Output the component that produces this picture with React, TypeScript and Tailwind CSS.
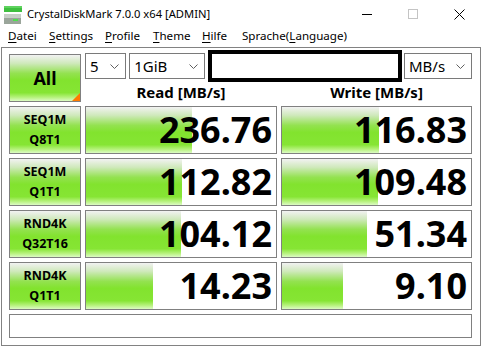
import React from "react";

const FONT = { fontFamily: '"Noto Sans", "Open Sans", sans-serif' } as React.CSSProperties;

const rows = [
  { a: "SEQ1M", b: "Q8T1", r: "236.76", rw: 106, w: "116.83", ww: 97 },
  { a: "SEQ1M", b: "Q1T1", r: "112.82", rw: 96, w: "109.48", ww: 96 },
  { a: "RND4K", b: "Q32T16", r: "104.12", rw: 95, w: "51.34", ww: 85 },
  { a: "RND4K", b: "Q1T1", r: "14.23", rw: 67, w: "9.10", ww: 61 },
];

const green =
  "bg-[linear-gradient(to_bottom,#f2f2f2_0%,#cfe9bb_18%,#93e250_40%,#82e32e_55%,#86e534_82%,#b6f27c_92%,#dcfbc4_100%)]";

function Chevron() {
  return (
    <svg width="9" height="5" viewBox="0 0 9 5" className="shrink-0">
      <path d="M0.5 0.5 L4.5 4.5 L8.5 0.5" fill="none" stroke="#606060" strokeWidth="1" />
    </svg>
  );
}

function Combo({ text, w }: { text: string; w: string }) {
  return (
    <div className={`${w} h-[26px] border border-[#7a7a7a] bg-white flex items-center justify-between pl-[4px] pr-[6px] shrink-0`}>
      <span className="text-[15px] leading-none text-black">{text}</span>
      <Chevron />
    </div>
  );
}

function U({ c }: { c: string }) {
  return <span className="underline underline-offset-2 decoration-1">{c}</span>;
}

export default function App() {
  return (
    <div className="w-[482px] h-[347px] bg-white relative overflow-hidden text-black" style={FONT}>
      {/* Title bar */}
      <div className="h-[28px] flex items-center">
        <svg width="20" height="18" viewBox="0 0 20 18" className="ml-[4px] mt-[1px]">
          <rect x="0" y="0" width="18" height="6" fill="#3fbf3f" />
          <rect x="0" y="0" width="18" height="2" fill="#5fd35f" />
          <rect x="0" y="8" width="17" height="10" fill="#9aa59a" />
          <rect x="0" y="8" width="17" height="4" fill="#c7cfc7" />
          <rect x="9" y="13" width="5" height="2" fill="#4fdf4f" />
        </svg>
        <span className="ml-[3px] text-[11.2px] text-black">CrystalDiskMark 7.0.0 x64 [ADMIN]</span>
        <div className="ml-auto flex items-center h-full">
          <div className="w-[46px] h-full flex items-center justify-center">
            <svg width="10" height="10" viewBox="0 0 10 10"><path d="M0 5.5 H10" stroke="#000" strokeWidth="1" /></svg>
          </div>
          <div className="w-[46px] h-full flex items-center justify-center">
            <svg width="10" height="10" viewBox="0 0 10 10"><rect x="0.5" y="0.5" width="9" height="9" fill="none" stroke="#c4c4c4" strokeWidth="1" /></svg>
          </div>
          <div className="w-[46px] h-full flex items-center justify-center">
            <svg width="11" height="11" viewBox="0 0 11 11"><path d="M0.5 0.5 L10.5 10.5 M10.5 0.5 L0.5 10.5" stroke="#000" strokeWidth="1" /></svg>
          </div>
        </div>
      </div>

      {/* Menu bar */}
      <div className="h-[19px] flex items-start pl-[8px] text-[11.6px] leading-[16px]">
        <span className="w-[41px]"><U c="D" />atei</span>
        <span className="w-[56px]"><U c="S" />ettings</span>
        <span className="w-[48px]"><U c="P" />rofile</span>
        <span className="w-[49px]"><U c="T" />heme</span>
        <span className="w-[40px]"><U c="H" />ilfe</span>
        <span>Sprache(<U c="L" />anguage)</span>
      </div>

      {/* Main panel */}
      <div className="ml-[1px] w-[480px] h-[299px] border border-[#828282] bg-white pt-[2px] pl-[7px] flex flex-col">
        <div className="flex gap-[4px] h-[52px]">
          <div className={`mt-[4px] w-[72px] h-[48px] border border-[#808080] ${green} relative flex items-center justify-center`}>
            <span className="text-[18px] font-bold">All</span>
            <div className="absolute right-0 bottom-0 w-0 h-0 border-l-[8px] border-l-transparent border-b-[8px] border-b-[#ff7a00]" />
          </div>
          <div className="flex flex-col w-[387px]">
            <div className="h-[32px] flex items-center">
              <Combo text="5" w="w-[41px]" />
              <div className="w-[4px]" />
              <Combo text="1GiB" w="w-[76px]" />
              <div className="w-[4px]" />
              <div className="w-[194px] h-[32px] border-[4px] border-black bg-white shrink-0" />
              <div className="w-[2px]" />
              <Combo text="MB/s" w="w-[68px]" />
            </div>
            <div className="flex gap-[4px] h-[20px] items-center text-[15px] font-bold">
              <div className="w-[192px] text-center">Read [MB/s]</div>
              <div className="w-[191px] text-center">Write [MB/s]</div>
            </div>
          </div>
        </div>

        {rows.map((r, i) => (
          <div key={i} className="flex gap-[4px] h-[48px] mt-[4px]">
            <div className={`w-[72px] h-[48px] border border-[#808080] ${green} flex flex-col items-center justify-center text-[12.5px] font-bold leading-[20px]`}>
              <span>{r.a}</span>
              <span>{r.b}</span>
            </div>
            <div className="w-[192px] h-[48px] border border-[#808080] bg-white relative">
              <div className={`absolute left-0 top-0 bottom-0 ${green}`} style={{ width: r.rw }} />
              <div className="relative h-full flex items-center justify-end pr-[4px] text-[36px] font-bold leading-none">
                {r.r}
              </div>
            </div>
            <div className="w-[191px] h-[48px] border border-[#808080] bg-white relative">
              <div className={`absolute left-0 top-0 bottom-0 ${green}`} style={{ width: r.ww }} />
              <div className="relative h-full flex items-center justify-end pr-[4px] text-[36px] font-bold leading-none">
                {r.w}
              </div>
            </div>
          </div>
        ))}

        <div className="mt-[4px] w-[463px] h-[24px] border border-[#808080] bg-white" />
      </div>
    </div>
  );
}
